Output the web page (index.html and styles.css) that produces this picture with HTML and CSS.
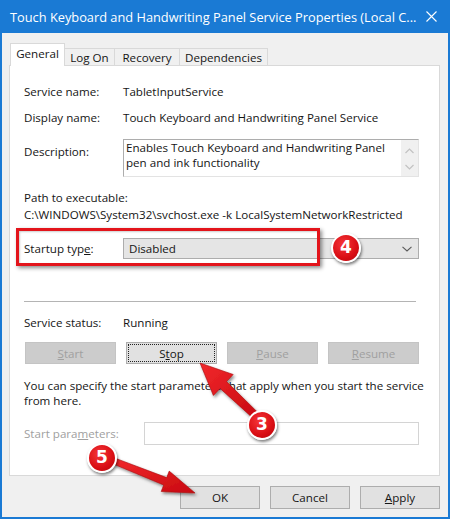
FILE: index.html
```html
<!DOCTYPE html>
<html lang="en">
<head>
<meta charset="utf-8">
<title>Service Properties</title>
<link rel="stylesheet" href="styles.css">
</head>
<body>
<div class="window">
  <div class="titlebar">
    <span class="title">Touch Keyboard and Handwriting Panel Service Properties (Local C...</span>
    <svg class="close" width="11" height="11" viewBox="0 0 11 11"><path d="M0.5 0.5 L10.5 10.5 M10.5 0.5 L0.5 10.5" stroke="#fff" stroke-width="1.1" fill="none"/></svg>
  </div>
  <div class="tabs">
    <div class="tab active">General</div>
    <div class="tab t-logon">Log On</div>
    <div class="tab t-recovery">Recovery</div>
    <div class="tab t-deps">Dependencies</div>
  </div>
  <div class="panel">
    <div class="row r-name"><span class="label">Service name:</span><span>TabletInputService</span></div>
    <div class="row r-display"><span class="label">Display name:</span><span>Touch Keyboard and Handwriting Panel Service</span></div>
    <div class="row r-desc">
      <span class="label">Description:</span>
      <div class="desc">
        <div class="desc-text">Enables Touch Keyboard and Handwriting Panel<br>pen and ink functionality</div>
        <div class="scroll">
          <svg width="9" height="6" viewBox="0 0 9 6"><path d="M0.5 5 L4.5 1 L8.5 5" stroke="#c2c2c2" stroke-width="1.2" fill="none"/></svg>
          <svg width="9" height="6" viewBox="0 0 9 6"><path d="M0.5 1 L4.5 5 L8.5 1" stroke="#c2c2c2" stroke-width="1.2" fill="none"/></svg>
        </div>
      </div>
    </div>
    <div class="path-label">Path to executable:</div>
    <div class="path-value">C:\WINDOWS\System32\svchost.exe -k LocalSystemNetworkRestricted</div>
    <div class="row r-startup">
      <span class="label">Startup typ<u>e</u>:</span>
      <div class="combo"><span>Disabled</span>
        <svg width="10" height="6" viewBox="0 0 10 6"><path d="M0.5 0.8 L5 5 L9.5 0.8" stroke="#5a5a5a" stroke-width="1.1" fill="none"/></svg>
      </div>
    </div>
    <div class="sep"></div>
    <div class="row r-status"><span class="label">Service status:</span><span>Running</span></div>
    <div class="btnrow">
      <button class="btn disabled"><u>S</u>tart</button>
      <button class="btn focus">S<u>t</u>op</button>
      <button class="btn disabled"><u>P</u>ause</button>
      <button class="btn disabled"><u>R</u>esume</button>
    </div>
    <div class="note">You can specify the start parameters that apply when you start the service<br>from here.</div>
    <div class="row r-params">
      <span class="label params-label">Start para<u>m</u>eters:</span>
      <div class="input"></div>
    </div>
  </div>
  <div class="footer">
    <button class="btn fbtn">OK</button>
    <button class="btn fbtn">Cancel</button>
    <button class="btn fbtn"><u>A</u>pply</button>
  </div>

  <div class="highlight"></div>
  <svg class="arrows" width="450" height="519" viewBox="0 0 450 519">
    <defs>
      <filter id="sh" x="-20%" y="-20%" width="140%" height="140%">
        <feDropShadow dx="1.5" dy="2" stdDeviation="1.5" flood-color="#000" flood-opacity="0.45"/>
      </filter>
      <linearGradient id="rg" x1="0" y1="0" x2="1" y2="1">
        <stop offset="0" stop-color="#f2282c"/>
        <stop offset="1" stop-color="#c80a10"/>
      </linearGradient>
    </defs>
    <polygon filter="url(#sh)" fill="url(#rg)" stroke="#a80a0e" stroke-width="0.6"
      points="255.1,411.8 224.5,381.6 231.2,374.5 198,363 211.4,395.5 218.1,388.4 249.9,417.2"/>
    <polygon filter="url(#sh)" fill="url(#rg)" stroke="#a80a0e" stroke-width="0.6"
      points="113.1,458.2 164.7,477.6 167.2,471.1 193,493 159.2,491.5 161.7,485.0 110.9,463.8"/>
  </svg>
  <div class="badge b4">4</div>
  <div class="badge b3">3</div>
  <div class="badge b5">5</div>
</div>
</body>
</html>
```
FILE: styles.css
```css
* { box-sizing: border-box; }
html, body { margin: 0; padding: 0; }
body {
  width: 450px;
  height: 519px;
  overflow: hidden;
  background: #f0f0f0;
  font-family: "Open Sans", "Noto Sans", sans-serif;
  font-size: 11.6px;
  color: #151515;
}
.window {
  position: relative;
  width: 450px;
  height: 519px;
  background: #f0f0f0;
  border: 2px solid #1a7ad4;
  border-top: 0;
}
.titlebar {
  height: 33px;
  margin: 0 -2px;
  background: #1a7ad4;
  display: flex;
  align-items: center;
  padding: 0 13px 0 10px;
  color: #fff;
  font-size: 12.8px;
  white-space: nowrap;
}
.title { flex: 1; }
.close { flex: none; }
.tabs {
  display: flex;
  align-items: flex-end;
  height: 32px;
  padding-left: 8px;
}
.tab {
  height: 17px;
  border: 1px solid #d9d9d9;
  border-bottom: 0;
  background: #f0f0f0;
  display: flex;
  align-items: center;
  justify-content: center;
  line-height: 15px;
}
.tab.active {
  position: relative;
  z-index: 1;
  height: 23px;
  width: 55px;
  margin-bottom: -1px;
  background: #fff;
  align-items: flex-start;
  padding-top: 2px;
  line-height: 16px;
}
.t-logon { width: 50px; border-left: 0; }
.t-recovery { width: 65px; border-left: 0; }
.t-deps { width: 88px; border-left: 0; }
.panel {
  margin-left: 7px;
  width: 431px;
  height: 411px;
  background: #fff;
  border: 1px solid #d9d9d9;
  padding-left: 14px;
}
.row { display: flex; align-items: center; line-height: 16px; white-space: nowrap; }
.label { width: 99px; flex: none; }
.r-name { margin-top: 18px; }
.r-display { margin-top: 10px; }
.r-desc { margin-top: 13px; align-items: flex-start; }
.r-desc .label { padding-top: 5px; }
.desc {
  width: 296px;
  height: 38px;
  border: 1px solid #adadad;
  border-right-color: #e3e3e3;
  border-bottom-color: #e3e3e3;
  display: flex;
}
.desc-text { flex: 1; padding-left: 2px; line-height: 15px; }
.scroll {
  width: 17px;
  background: #f0f0f0;
  display: flex;
  flex-direction: column;
  justify-content: space-between;
  align-items: center;
  padding: 8px 0 6px;
}
.path-label { margin-top: 13px; line-height: 16px; }
.path-value { margin-top: 1px; line-height: 16px; white-space: nowrap; }
.r-startup { margin-top: 15px; }
.combo {
  width: 296px;
  height: 21px;
  border: 1px solid #adadad;
  background: #e5e5e5;
  display: flex;
  align-items: center;
  justify-content: space-between;
  padding: 0 6px 0 5px;
}
.sep { margin-top: 42px; width: 392px; height: 1px; background: #b4b4b4; }
.r-status { margin-top: 13px; }
.btnrow {
  margin-top: 11px;
  margin-left: 1px;
  display: grid;
  grid-template-columns: repeat(4, 91px);
  column-gap: 10px;
}
.btn {
  height: 22px;
  margin: 0;
  padding: 0;
  border: 1px solid #adadad;
  background: #e1e1e1;
  font: inherit;
  color: #151515;
  display: flex;
  align-items: center;
  justify-content: center;
}
.btn.disabled { background: #cccccc; border-color: #c4c4c4; color: #a0a0a0; }
.btn.focus { outline: 1px dotted #222; outline-offset: -3px; }
.note { margin-top: 14px; line-height: 15px; white-space: nowrap; }
.r-params { margin-top: 14px; }
.params-label { width: 120px; color: #a0a0a0; }
.input { width: 275px; height: 23px; border: 1px solid #d4d4d4; background: #fff; }
.footer {
  display: flex;
  justify-content: flex-end;
  column-gap: 10px;
  margin-top: 10px;
  padding-right: 8px;
}
.fbtn { width: 80px; height: 23px; }

/* annotation overlays */
.highlight {
  position: absolute;
  left: 14px;
  top: 228px;
  width: 304px;
  height: 38px;
  border: 3px solid #e3141b;
  box-shadow: 2px 2px 4px rgba(0,0,0,0.45), inset 1px 1px 2px rgba(0,0,0,0.2);
}
.arrows { position: absolute; left: 0; top: 0; pointer-events: none; }
.badge {
  position: absolute;
  width: 30px;
  height: 30px;
  border-radius: 50%;
  border: 2.5px solid #fff;
  background: radial-gradient(circle at 40% 35%, #f5363a 0%, #d90d13 60%, #b0060b 100%);
  box-shadow: 1px 2px 3px rgba(0,0,0,0.5);
  color: #fff;
  font-family: "DejaVu Sans", "Liberation Sans", sans-serif;
  font-weight: bold;
  font-size: 17px;
  line-height: 25px;
  text-align: center;
}
.b4 { left: 329px; top: 233px; }
.b3 { left: 245px; top: 410px; }
.b5 { left: 85px; top: 443px; }
```
